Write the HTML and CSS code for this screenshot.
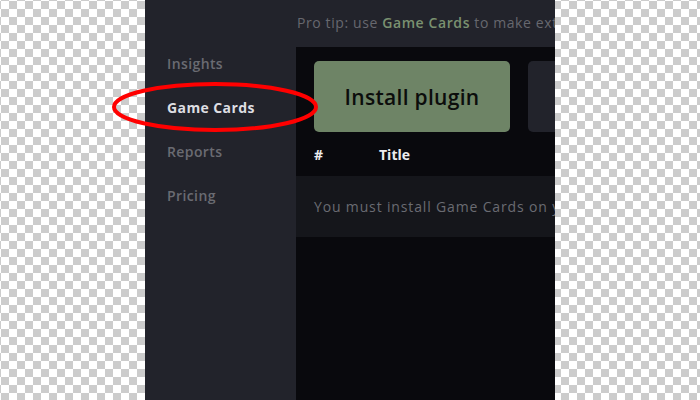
FILE: index.html
```html
<!DOCTYPE html>
<html>
<head>
<meta charset="utf-8">
<link rel="stylesheet" href="styles.css">
</head>
<body>
<div class="frame">
  <nav class="sidebar">
    <a class="nav-item">Insights</a>
    <a class="nav-item active">Game Cards</a>
    <a class="nav-item">Reports</a>
    <a class="nav-item">Pricing</a>
  </nav>
  <main class="main">
    <div class="tip">Pro tip: use <span class="tip-link">Game Cards</span> to make extra money from your games</div>
    <div class="panel">
      <div class="actions">
        <button class="install">Install plugin</button>
        <div class="card"></div>
      </div>
      <div class="thead">
        <span class="col-num">#</span>
        <span class="col-title">Title</span>
      </div>
      <div class="row">You must install Game Cards on your site to see your cards here.</div>
    </div>
  </main>
</div>
<svg class="annot" width="210" height="54" viewBox="0 0 210 54">
  <ellipse cx="105" cy="27" rx="101" ry="23" fill="none" stroke="#ff0000" stroke-width="4"/>
</svg>
</body>
</html>
```
FILE: styles.css
```css
html, body {
  margin: 0;
  padding: 0;
  height: 100%;
}
body {
  width: 700px;
  height: 400px;
  overflow: hidden;
  position: relative;
  display: flex;
  justify-content: center;
  background-color: #ffffff;
  background-image:
    linear-gradient(45deg, #cccccc 25%, transparent 25%, transparent 75%, #cccccc 75%),
    linear-gradient(45deg, #cccccc 25%, transparent 25%, transparent 75%, #cccccc 75%);
  background-size: 16px 16px;
  background-position: 1px 1px, 9px 9px;
  font-family: "Open Sans", "DejaVu Sans", sans-serif;
}
.frame {
  width: 410px;
  height: 400px;
  display: flex;
  overflow: hidden;
  background: #22232b;
}
.sidebar {
  width: 151px;
  flex: none;
  display: flex;
  flex-direction: column;
  padding: 54px 0 0 22px;
  box-sizing: border-box;
  gap: 24px;
}
.nav-item {
  display: block;
  font-size: 14px;
  line-height: 20px;
  letter-spacing: 0.4px;
  color: #6a6b72;
  font-weight: 600;
}
.nav-item.active {
  color: #dedee2;
  font-weight: 700;
}
.main {
  flex: none;
  width: 500px;
  display: flex;
  flex-direction: column;
}
.tip {
  height: 47px;
  box-sizing: border-box;
  padding: 13px 0 0 1px;
  font-size: 14px;
  line-height: 20px;
  letter-spacing: 0.6px;
  color: #67686f;
  white-space: nowrap;
}
.tip-link {
  color: #7a9170;
  font-weight: 600;
}
.panel {
  flex: 1;
  background: #09090d;
}
.actions {
  display: flex;
  gap: 18px;
  padding: 14px 18px 0;
}
.install {
  width: 196px;
  height: 71px;
  border: none;
  border-radius: 5px;
  background: #6e8466;
  color: #0c0d0c;
  font-family: "Open Sans", sans-serif;
  font-size: 21px;
  font-weight: 600;
  letter-spacing: 0.3px;
  padding: 0;
}
.card {
  width: 196px;
  height: 71px;
  border-radius: 5px;
  background: #22232b;
}
.thead {
  display: flex;
  height: 44px;
  align-items: center;
  padding: 0 18px;
  font-size: 14px;
  font-weight: 700;
  color: #ececef;
}
.col-num {
  width: 65px;
}
.row {
  height: 61px;
  box-sizing: border-box;
  background: #15161b;
  padding: 21px 18px 0;
  font-size: 14px;
  line-height: 20px;
  letter-spacing: 0.85px;
  color: #6a6b72;
  white-space: nowrap;
}
.annot {
  position: absolute;
  left: 110px;
  top: 80px;
}
```
